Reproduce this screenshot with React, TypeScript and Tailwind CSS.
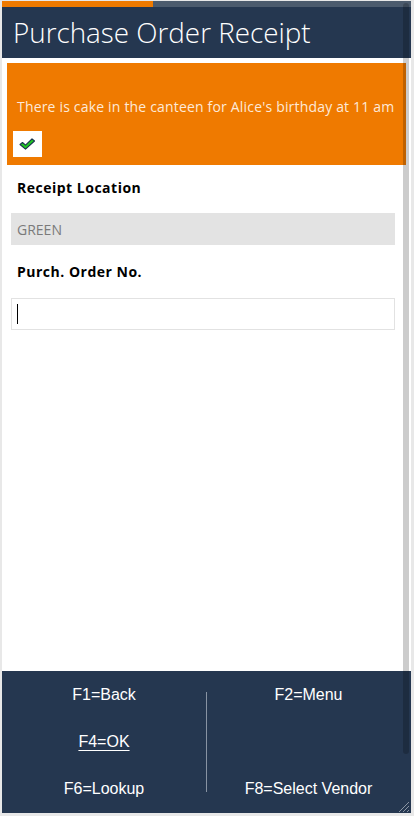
import React from 'react';

const openSans = { fontFamily: '"Open Sans", "Noto Sans", sans-serif' };
const arial = { fontFamily: '"Liberation Sans", Arial, sans-serif' };

function CheckIcon() {
  return (
    <svg width="17" height="12" viewBox="0 0 17 12">
      <path
        d="M1 6.5 L3.5 4.5 L6.5 7.2 L13 0.8 L15.5 3 L6.5 11.2 Z"
        fill="#22c822"
        stroke="#17324f"
        strokeWidth="1.1"
        strokeLinejoin="round"
      />
    </svg>
  );
}

export default function App() {
  return (
    <div className="relative w-[414px] h-[816px] bg-[#e8e8e8] pl-[2px] pr-[3px] pt-[1px] pb-[3px] flex">
      <div className="flex-1 flex flex-col bg-white overflow-hidden">
        {/* progress bar */}
        <div className="h-[6px] flex bg-[#4c5b6d]">
          <div className="w-[151px] bg-[#ef7a00]" />
        </div>

        {/* header */}
        <div className="h-[51px] bg-[#253750] flex items-center pl-[11px]" style={openSans}>
          <h1 className="text-[27.8px] font-light text-white leading-none">Purchase Order Receipt</h1>
        </div>

        {/* content */}
        <div className="flex-1 flex flex-col">
          <div className="mx-[5px] mt-[5px] h-[102px] bg-[#ef7a00] flex flex-col pl-[6px]" style={openSans}>
            <p className="mt-[34px] text-[14px] leading-[20px] tracking-[0.18px] text-[#fde9d9] pl-[4px] whitespace-nowrap">
              There is cake in the canteen for Alice's birthday at 11 am
            </p>
            <div className="mt-[14px] w-[29px] h-[26px] bg-white flex items-center justify-center">
              <CheckIcon />
            </div>
          </div>

          <div className="px-[9px]" style={openSans}>
            <div className="h-[48px] pb-[4px] flex items-center pl-[6px] text-[14px] font-bold tracking-[0.5px] text-black">Receipt Location</div>
            <div className="w-[384px] h-[32px] bg-[#e3e3e3] flex items-center pl-[6px] text-[14px] text-[#7a7a7a]">GREEN</div>
            <div className="h-[53px] pb-[1px] flex items-center pl-[6px] text-[14px] font-bold tracking-[0.5px] text-black">Purch. Order No.</div>
            <div className="w-[384px] h-[32px] border border-[#e2e2e2] flex items-center pl-[5px]">
              <div className="w-px h-[20px] bg-black" />
            </div>
          </div>
        </div>

        {/* footer */}
        <div className="h-[142px] bg-[#253750] grid grid-cols-[204px_1fr] text-[16px] text-white" style={arial}>
          <div className="grid grid-rows-3">
            <div className="h-[47px] flex items-center justify-center">F1=Back</div>
            <div className="h-[47px] flex items-center justify-center">
              <span className="underline underline-offset-[3px]">F4=OK</span>
            </div>
            <div className="h-[47px] flex items-center justify-center">F6=Lookup</div>
          </div>
          <div className="relative grid grid-rows-3">
            <div className="absolute left-0 top-[21px] h-[100px] w-px bg-[#8893a3]" />
            <div className="h-[47px] flex items-center justify-center">F2=Menu</div>
            <div className="h-[47px]" />
            <div className="h-[47px] flex items-center justify-center">F8=Select Vendor</div>
          </div>
        </div>
      </div>

      {/* scrollbar overlay */}
      <div className="absolute left-[403px] top-[3px] w-[6px] h-[751px] rounded-[3px] bg-black/20" />

      {/* resize grip */}
      <svg className="absolute left-[397px] top-[800px]" width="13" height="13" viewBox="0 0 13 13">
        <path d="M12 2 L2 12 M12 6 L6 12 M12 10 L10 12" stroke="#8b95a3" strokeWidth="1" />
      </svg>
    </div>
  );
}
